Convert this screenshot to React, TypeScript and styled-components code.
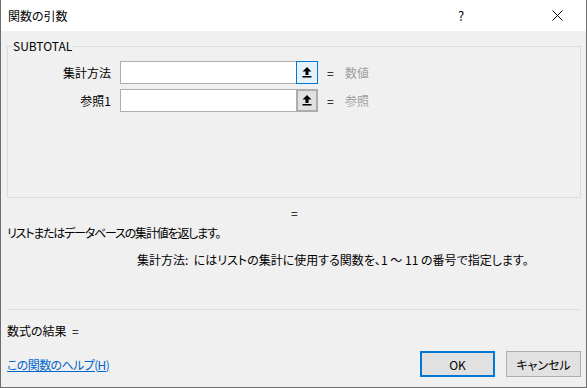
import styled, { createGlobalStyle, css } from "styled-components";

const GlobalStyle = createGlobalStyle`
  html, body {
    margin: 0;
    padding: 0;
    background: #ffffff;
  }
  body {
    font-family: "Noto Sans CJK JP", "Noto Sans", sans-serif;
    font-size: 12px;
    font-feature-settings: "palt";
    color: #000000;
  }
`;

const StyledWindow = styled.div`
  box-sizing: border-box;
  width: 587px;
  height: 388px;
  display: flex;
  flex-direction: column;
  background-color: #f0f0f0;
  border: 1px solid #6d6d6d;
  border-top: none;
`;

const StyledTitleBar = styled.div`
  height: 31px;
  flex-shrink: 0;
  display: flex;
  align-items: center;
  background-color: #ffffff;
  padding-left: 7px;
`;

const StyledTitle = styled.div`
  flex: 1;
  font-size: 12px;
`;

const StyledTitleButton = styled.div<{ $gap?: number }>`
  width: 58px;
  height: 31px;
  margin-right: ${({ $gap }) => $gap ?? 0}px;
  display: flex;
  align-items: center;
  justify-content: center;
  font-size: 13px;
`;

const StyledBody = styled.div`
  flex: 1;
  display: flex;
  flex-direction: column;
  padding: 0 5px 0 6px;
`;

const StyledGroup = styled.fieldset`
  box-sizing: border-box;
  margin: 8px 0 0 0;
  padding: 8px 0 0 0;
  height: 159px;
  border: 1px solid #dcdcdc;
  display: flex;
  flex-direction: column;
  gap: 5px;
`;

const StyledLegend = styled.legend`
  padding: 0 1px;
  margin-left: 4px;
  line-height: 14px;
`;

const StyledArgRow = styled.div`
  display: flex;
  align-items: center;
  height: 23px;
`;

const StyledArgLabel = styled.div`
  width: 103px;
  text-align: right;
  padding-right: 9px;
`;

const StyledField = styled.div`
  box-sizing: border-box;
  width: 198px;
  height: 23px;
  display: flex;
  border: 1px solid #adadad;
  background-color: #ffffff;
`;

const StyledFieldInput = styled.div`
  flex: 1;
`;

const StyledRefButton = styled.div<{ $focused?: boolean }>`
  box-sizing: border-box;
  width: 22px;
  height: 23px;
  margin: -1px -1px -1px 0;
  display: flex;
  align-items: center;
  justify-content: center;
  ${({ $focused }) =>
    $focused
      ? css`
          border: 1px solid #0078d7;
          background-color: #e5f1fb;
        `
      : css`
          border: 2px solid #adadad;
          background-color: #e1e1e1;
        `}
`;

const StyledEquals = styled.div`
  margin-left: 9px;
  width: 18px;
`;

const StyledHint = styled.div`
  color: #a0a0a0;
`;

const StyledResultEquals = styled.div`
  margin-top: 6px;
  padding-left: 284px;
  line-height: 18px;
`;

const StyledDescription = styled.div`
  margin-top: 2px;
  line-height: 18px;
  letter-spacing: -1.2px;
`;

const StyledArgHelp = styled.div`
  margin-top: 9px;
  padding-left: 130px;
  line-height: 18px;
  white-space: pre;
`;

const StyledSeparator = styled.div`
  margin: 40px 1px 0 1px;
  height: 1px;
  background-color: #dcdcdc;
`;

const StyledResult = styled.div`
  margin-top: 12px;
  line-height: 18px;
  white-space: pre;
`;

const StyledFooter = styled.div`
  margin-top: 11px;
  display: flex;
  align-items: center;
  gap: 11px;
`;

const StyledLinkWrap = styled.div`
  flex: 1;
`;

const StyledLink = styled.a`
  color: #0066cc;
  text-decoration: underline;
  letter-spacing: -0.6px;
  cursor: pointer;
`;

const StyledButton = styled.button<{ $primary?: boolean }>`
  box-sizing: border-box;
  width: 75px;
  height: 26px;
  font-family: inherit;
  font-size: 12px;
  font-feature-settings: "palt";
  color: #000000;
  background-color: #e1e1e1;
  border: ${({ $primary }) =>
    $primary ? "2px solid #0078d7" : "1px solid #adadad"};
  padding: 0;
`;

const RefIcon = () => (
  <svg width="10" height="11" viewBox="0 0 10 11">
    <path d="M5 0 L9.5 4.5 L6.5 4.5 L6.5 8 L3.5 8 L3.5 4.5 L0.5 4.5 Z" fill="#000" />
    <rect x="0.5" y="9" width="9" height="1.5" fill="#000" />
  </svg>
);

const CloseIcon = () => (
  <svg width="11" height="11" viewBox="0 0 11 11">
    <path d="M0.5 0.5 L10.5 10.5 M10.5 0.5 L0.5 10.5" stroke="#000" strokeWidth="1" />
  </svg>
);

interface Arg {
  label: string;
  hint: string;
  focused?: boolean;
}

const args: Arg[] = [
  { label: "集計方法", hint: "数値", focused: true },
  { label: "参照1", hint: "参照" },
];

const App = () => {
  return (
    <>
      <GlobalStyle />
      <StyledWindow>
        <StyledTitleBar>
          <StyledTitle>関数の引数</StyledTitle>
          <StyledTitleButton $gap={38}>?</StyledTitleButton>
          <StyledTitleButton>
            <CloseIcon />
          </StyledTitleButton>
        </StyledTitleBar>
        <StyledBody>
          <StyledGroup>
            <StyledLegend>SUBTOTAL</StyledLegend>
            {args.map(({ label, hint, focused }) => (
              <StyledArgRow key={label}>
                <StyledArgLabel>{label}</StyledArgLabel>
                <StyledField>
                  <StyledFieldInput />
                  <StyledRefButton $focused={focused}>
                    <RefIcon />
                  </StyledRefButton>
                </StyledField>
                <StyledEquals>=</StyledEquals>
                <StyledHint>{hint}</StyledHint>
              </StyledArgRow>
            ))}
          </StyledGroup>
          <StyledResultEquals>=</StyledResultEquals>
          <StyledDescription>
            リストまたはデータベースの集計値を返します。
          </StyledDescription>
          <StyledArgHelp>
            {"集計方法:  にはリストの集計に使用する関数を、1 ～ 11 の番号で指定します。"}
          </StyledArgHelp>
          <StyledSeparator />
          <StyledResult>{"数式の結果  ="}</StyledResult>
          <StyledFooter>
            <StyledLinkWrap>
              <StyledLink>この関数のヘルプ(H)</StyledLink>
            </StyledLinkWrap>
            <StyledButton $primary>OK</StyledButton>
            <StyledButton>キャンセル</StyledButton>
          </StyledFooter>
        </StyledBody>
      </StyledWindow>
    </>
  );
};

export default App;
